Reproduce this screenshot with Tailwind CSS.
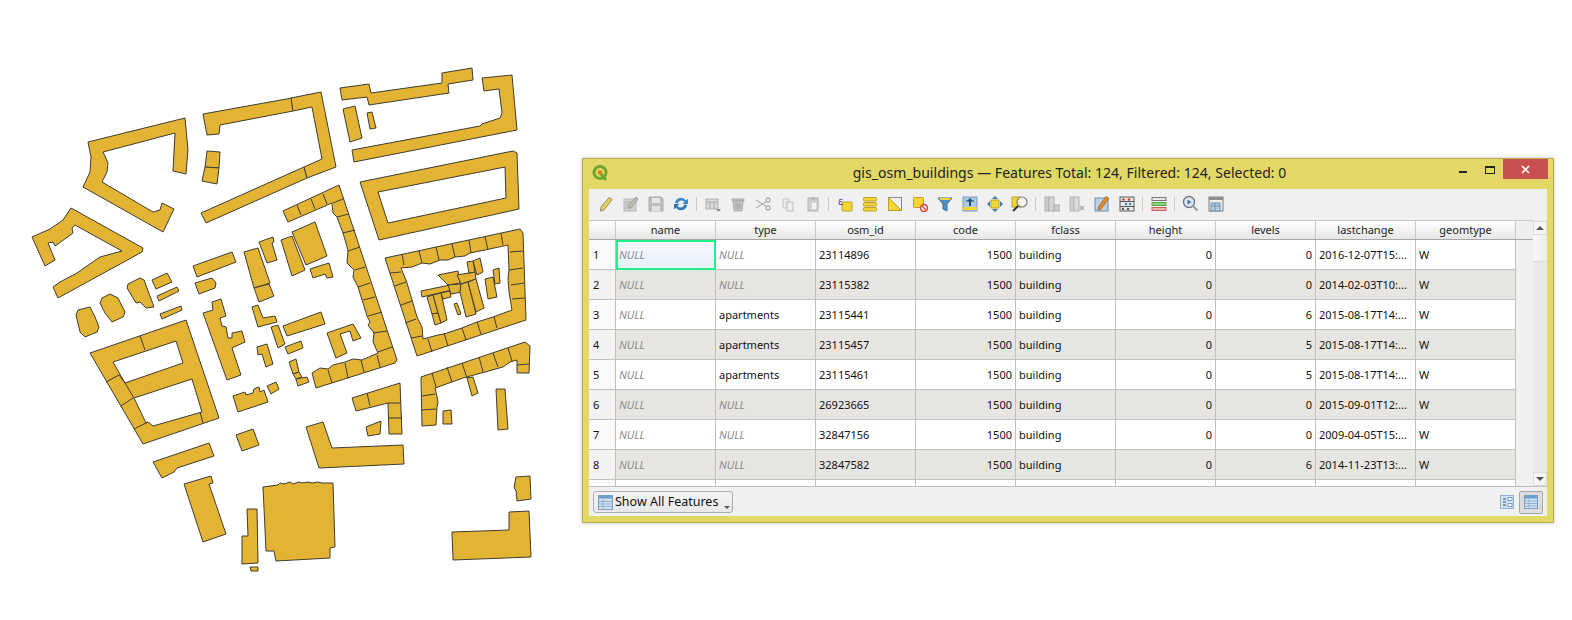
<!DOCTYPE html>
<html>
<head>
<meta charset="utf-8">
<script src="https://cdn.jsdelivr.net/npm/@tailwindcss/browser@4"></script>
</head>
<body class="bg-white overflow-hidden">
<div class="flex w-[1572px] h-[620px] bg-white font-['Noto_Sans',sans-serif]">
  <svg class="w-[582px] h-[620px] shrink-0" viewBox="0 0 582 620">
    <g fill="#e3b333" stroke="#3f3c30" stroke-width="1" stroke-linejoin="round">
      <polygon points="88,142 185,118 188,150 186,174 173,171 175,133 103,152 108,163 107,172 102,182 153,212 160,210 162,203 174,209 163,232 83,187 90,172 91,157"/>
      <polygon points="71,208 143,248 142,252 58,298 53,287 60,282 77,273 84,268 100,257 122,251 75,225 72,228 73,233 55,246 53,242 48,243 55,260 45,266 32,237 50,229 63,220"/>
      <polygon points="203,114 292,98 293,111 220,125 219,134 207,135"/>
      <polygon points="201,213 304,167 307,178 206,223"/>
      <polygon points="291,98 321,92 336,167 307,178 304,167 322,159 312,107 293,111"/>
      <polygon points="207,151 220,152 219,168 205,167"/>
      <polygon points="205,167 219,168 217,184 202,181"/>
      <polygon points="340,88 369,84 371,93 442,83 442,73 472,68 473,80 448,84 449,93 369,105 367,97 342,100"/>
      <polygon points="343,109 355,106 362,138 350,142"/>
      <polygon points="367,113 372,112 376,128 370,129"/>
      <polygon points="482,78 512,75 517,130 354,162 352,150 480,126 482,124 500,118 502,113 499,89 484,91"/>
      <path fill-rule="evenodd" d="M360,182 L513,151 L517,153 L519,209 L379,240 Z M378,192 L505,167 L506,198 L388,223 Z"/>
      <path fill-rule="evenodd" d="M385,258 L520,229 L523,233 L526,320 L417,356 Z M401,268 L412,267 L422,263 L430,264 L440,260 L448,260 L455,257 L465,256 L470,253 L485,250 L508,245 L509,270 L508,278 L509,292 L512,310 L493,317 L477,322 L462,328 L444,334 L438,335 L423,339 L422,327 L417,317 L412,300 L407,283 Z"/>
      <g fill="none">
        <path d="M402,254 L404,265 M419,251 L422,263 M436,247 L439,260 M452,244 L455,257 M469,240 L471,253 M485,237 L488,250 M501,233 L503,245 M510,252 L523,251 M509,270 L523,268 M511,285 L524,283 M512,299 L525,298 M494,317 L497,328 M477,322 L481,334 M462,328 L466,340 M444,333 L448,346 M428,339 L432,352 M390,273 L401,272 M395,286 L406,282 M401,305 L412,301 M405,323 L416,319 M411,338 L422,336"/>
      </g>
      <polygon points="421,291 450,285 452,290 422,297"/>
      <polygon points="441,293 450,291 451,297 443,299"/>
      <polygon points="427,297 433,295 438,313 432,314"/>
      <polygon points="432,314 438,313 441,323 435,325"/>
      <polygon points="433,295 441,293 447,320 441,323"/>
      <polygon points="438,275 458,271 460,283 448,285 445,282"/>
      <polygon points="457,275 475,272 476,279 461,284"/>
      <polygon points="448,285 461,284 462,292 451,294"/>
      <polygon points="461,284 468,282 476,314 466,317 460,292"/>
      <polygon points="468,282 476,279 484,308 476,312"/>
      <polygon points="467,262 473,261 475,272 469,273"/>
      <polygon points="473,261 480,258 483,272 477,275"/>
      <polygon points="485,279 493,277 497,297 488,299"/>
      <polygon points="493,270 499,268 500,283 495,284"/>
      <polygon points="454,304 457,303 461,314 458,315"/>
      <polygon points="283,211 339,185 344,200 397,360 395,363 316,388 312,373 320,368 328,369 333,365 345,362 353,359 362,360 378,353 373,342 374,333 368,325 370,322 367,316 363,303 358,287 353,277 354,270 347,263 348,250 343,233 337,217 333,213 332,203 288,222"/>
      <g fill="none">
        <path d="M297,205 L301,215 M311,199 L315,209 M323,194 L327,204 M333,203 L343,199 M337,217 L349,214 M343,233 L355,230 M348,251 L360,247 M355,270 L365,267 M358,287 L370,283 M363,300 L375,297 M368,316 L382,312 M373,333 L387,331 M378,352 L392,347 M377,355 L380,367 M361,360 L364,372 M345,363 L348,378 M328,370 L332,383"/>
      </g>
      <polygon points="292,232 315,222 327,256 306,265"/>
      <polygon points="281,240 292,236 305,270 292,276"/>
      <polygon points="310,269 329,263 333,277 327,278 325,274 313,278"/>
      <polygon points="259,242 273,237 274,242 272,243 277,260 267,263"/>
      <polygon points="244,252 258,248 270,283 254,288"/>
      <polygon points="254,288 269,284 274,296 259,302"/>
      <polygon points="193,266 232,252 236,262 197,277"/>
      <polygon points="195,283 212,278 216,283 215,288 199,294"/>
      <polygon points="152,280 167,273 172,282 156,289"/>
      <polygon points="157,296 177,287 179,291 159,301"/>
      <polygon points="160,314 181,306 182,310 162,319"/>
      <polygon points="203,313 213,310 212,302 221,299 226,316 220,318 222,326 226,327 228,338 232,338 232,333 242,331 245,342 232,348 241,375 227,380"/>
      <polygon points="252,307 258,305 263,318 275,316 277,322 258,327"/>
      <polygon points="283,326 321,312 325,324 287,336"/>
      <polygon points="271,327 278,325 285,344 278,348"/>
      <polygon points="285,347 301,341 303,348 288,354"/>
      <polygon points="257,347 267,344 273,364 266,367 262,354 258,355"/>
      <polygon points="289,362 296,359 299,372 293,374"/>
      <polygon points="293,374 299,372 302,377 296,379"/>
      <polygon points="296,379 307,377 309,382 298,386"/>
      <polygon points="267,386 276,382 279,389 271,394"/>
      <polygon points="327,333 353,324 361,338 353,341 350,331 340,334 347,353 336,358"/>
      <polygon points="233,396 245,392 246,395 253,393 254,389 259,387 260,392 264,390 268,402 238,412"/>
      <polygon points="236,435 253,429 259,445 242,451"/>
      <path fill-rule="evenodd" d="M90,353 L186,320 L219,418 L143,444 Z M113,362 L176,341 L183,363 L125,383 Z M134,398 L192,379 L202,412 L153,426 L148,422 L146,423 Z"/>
      <g fill="none">
        <path d="M140,336 L145,350 M106,382 L119,375 L125,383 L134,398 M121,406 L133,398 M134,429 L148,422 M200,412 L203,423"/>
      </g>
      <polygon points="153,462 209,443 214,456 177,468 174,472 162,478"/>
      <polygon points="184,484 211,476 213,483 209,484 226,534 203,542"/>
      <polygon points="263,487 278,485 280,483 284,484 290,482 293,484 299,482 302,483 308,482 312,483 318,482 322,483 323,483 333,483 335,547 330,548 330,558 276,561 274,551 266,551"/>
      <polygon points="247,509 257,509 258,563 242,564 242,536 248,536"/>
      <polygon points="250,567 258,567 258,571 251,571"/>
      <polygon points="306,427 323,422 332,448 403,445 404,464 319,468"/>
      <polygon points="352,398 400,383 402,434 389,434 388,403 356,411"/>
      <path fill="none" d="M367,393 L370,406 M388,403 L401,403 M389,418 L402,418"/>
      <polygon points="366,427 381,421 380,434 368,436"/>
      <polygon points="421,377 525,342 530,346 529,373 517,373 517,360 510,362 503,367 463,378 435,388 437,397 438,402 437,407 436,425 422,426"/>
      <path fill="none" d="M432,373 L436,387 M447,367 L452,382 M462,363 L467,378 M479,357 L483,372 M493,353 L498,367 M508,348 L512,361 M517,365 L529,364 M422,396 L435,394 M422,410 L436,409"/>
      <polygon points="467,378 473,377 478,393 472,396"/>
      <polygon points="443,411 451,410 452,424 443,424"/>
      <polygon points="496,389 505,389 508,429 498,430"/>
      <polygon points="516,477 530,476 531,499 517,501 516,490 514,488"/>
      <polygon points="452,532 509,530 509,512 529,511 531,557 453,560"/>
      <polygon points="128,284 140,278 144,280 154,307 146,308 140,302 136,303 127,288"/>
      <polygon points="102,298 110,294 118,298 125,312 123,317 112,322 105,313 100,303"/>
      <polygon points="76,315 78,310 90,307 95,317 99,327 97,332 85,337 80,332"/>
    </g>
  </svg>

  <div class="w-[972px] h-[365px] mt-[158px] shrink-0 border border-[#b8ab4c] bg-[#e2d866] flex flex-col shadow-[0_0_4px_rgba(0,0,0,0.25)]">
    <div class="h-[30px] shrink-0 flex items-start relative">
      <svg class="w-[18px] h-[18px] ml-[8px] mt-[5px]" viewBox="0 0 18 18">
        <circle cx="9" cy="8.5" r="6" fill="#e2d866" stroke="#6aa72c" stroke-width="3"/>
        <circle cx="9" cy="8.5" r="2.2" fill="#ee7913"/>
        <path d="M10 10 L15 16" stroke="#6aa72c" stroke-width="3"/>
      </svg>
      <div class="flex-1 text-center text-[14px] leading-[28px] tracking-[0.03px] text-[#222] whitespace-nowrap pl-[53px] pr-[76px]">gis_osm_buildings — Features Total: 124, Filtered: 124, Selected: 0</div>
      <div class="absolute right-[5px] top-0 flex items-start">
        <div class="w-[8px] h-[2px] mt-[12px] mr-[18px] bg-[#222]"></div>
        <div class="w-[10px] h-[8px] mt-[7px] mr-[8px] border border-[#222] border-t-2"></div>
        <div class="w-[45px] h-[20px] bg-[#c75050] flex items-center justify-center">
          <svg class="w-[9px] h-[9px]" viewBox="0 0 9 9"><path d="M1 1 L8 8 M8 1 L1 8" stroke="#fff" stroke-width="1.6"/></svg>
        </div>
      </div>
    </div>
    <div class="mx-[6px] h-[327px] bg-[#f0f0f0] flex flex-col overflow-hidden">
      <div class="h-[31px] shrink-0 flex items-center pl-[4px] pb-[2px]">
        <div class="w-[25px] flex justify-center"><svg class="w-[16px] h-[16px]" viewBox="0 0 16 16"><path d="M11 1.5 L14 3.5 L6 14 L2.5 15 L3 11 Z" fill="#e8cf5a" stroke="#8b8b6a"/></svg></div>
        <div class="w-[25px] flex justify-center"><svg class="w-[16px] h-[16px]" viewBox="0 0 16 16"><rect x="1" y="3" width="12" height="12" fill="#cfcfcc" stroke="#b5b5b2"/><path d="M3 6H10M3 9H8M3 12H7" stroke="#a8a8a5"/><path d="M13 1 L15 3 L8 12 L6 12 L6 9 Z" fill="#bdbdb0" stroke="#a0a09a"/></svg></div>
        <div class="w-[25px] flex justify-center"><svg class="w-[16px] h-[16px]" viewBox="0 0 16 16"><path d="M1 1H13L15 3V15H1Z" fill="#bdbdbd" stroke="#a8a8a8"/><rect x="4" y="2" width="8" height="5" fill="#e8e8e8"/><rect x="4" y="10" width="8" height="5" fill="#e0e0e0"/></svg></div>
        <div class="w-[25px] flex justify-center"><svg class="w-[16px] h-[16px]" viewBox="0 0 16 16"><path d="M2 7 A6 6 0 0 1 13 4.5 L15 2.5 V8 H9.5 L11.5 6 A4 4 0 0 0 4.5 7.5 Z" fill="#3a86c8"/><path d="M14 9 A6 6 0 0 1 3 11.5 L1 13.5 V8 H6.5 L4.5 10 A4 4 0 0 0 11.5 8.5 Z" fill="#2f76b8"/></svg></div>
        <div class="w-[7px] flex justify-center"><div class="w-px h-[14px] bg-[#c8c8c8]"></div></div>
        <div class="w-[25px] flex justify-center"><svg class="w-[16px] h-[16px]" viewBox="0 0 16 16"><rect x="1" y="3" width="12" height="10" fill="#d8d8d8" stroke="#b0b0b0"/><path d="M1 6H13M5 6V13M9 6V13" stroke="#b0b0b0"/><path d="M11 13H16L13.5 16Z" fill="#8a8a8a"/></svg></div>
        <div class="w-[25px] flex justify-center"><svg class="w-[16px] h-[16px]" viewBox="0 0 16 16"><path d="M2 3H14V5H2Z M3 5H13L12 15H4Z" fill="#c4c4c4" stroke="#ababab"/><path d="M6 7V13M8 7V13M10 7V13" stroke="#a5a5a5"/></svg></div>
        <div class="w-[25px] flex justify-center"><svg class="w-[16px] h-[16px]" viewBox="0 0 16 16"><circle cx="13" cy="4" r="2" fill="none" stroke="#adadad" stroke-width="1.3"/><circle cx="13" cy="12" r="2" fill="none" stroke="#adadad" stroke-width="1.3"/><path d="M1 4 L11.5 10.5 M1 12 L11.5 5.5" stroke="#b5b5b5" stroke-width="1.2"/></svg></div>
        <div class="w-[25px] flex justify-center"><svg class="w-[16px] h-[16px]" viewBox="0 0 16 16"><path d="M3 3H9V12H3Z" fill="#e8e8e8" stroke="#c4c4c4"/><path d="M7 6H13V15H7Z" fill="#eee" stroke="#bcbcbc"/></svg></div>
        <div class="w-[25px] flex justify-center"><svg class="w-[16px] h-[16px]" viewBox="0 0 16 16"><rect x="3" y="2" width="10" height="13" fill="#d0d0d0" stroke="#b0b0b0"/><rect x="6" y="1" width="4" height="3" fill="#bcbcbc"/><rect x="6" y="6" width="6" height="8" fill="#efefef" stroke="#c4c4c4"/></svg></div>
        <div class="w-[7px] flex justify-center"><div class="w-px h-[14px] bg-[#c8c8c8]"></div></div>
        <div class="w-[25px] flex justify-center"><svg class="w-[16px] h-[16px] overflow-visible" viewBox="0 0 16 16"><rect x="5" y="6" width="10" height="9" rx="1" fill="#f2d633" stroke="#b9a128"/><text x="1" y="9" font-size="11" font-family="Noto Sans" fill="#6a3a8a">ε</text></svg></div>
        <div class="w-[25px] flex justify-center"><svg class="w-[16px] h-[16px]" viewBox="0 0 16 16"><rect x="1.5" y="1.5" width="13" height="3.5" rx="1" fill="#f2d633" stroke="#b9a128"/><rect x="1.5" y="6.5" width="13" height="3.5" rx="1" fill="#f2d633" stroke="#b9a128"/><rect x="1.5" y="11.5" width="13" height="3.5" rx="1" fill="#f2d633" stroke="#b9a128"/></svg></div>
        <div class="w-[25px] flex justify-center"><svg class="w-[16px] h-[16px]" viewBox="0 0 16 16"><rect x="1.5" y="1.5" width="13" height="13" fill="#f0f0f0" stroke="#8a8a8a"/><path d="M1.5 1.5 L14.5 14.5 H1.5Z" fill="#f2d633" stroke="#b9a128"/></svg></div>
        <div class="w-[25px] flex justify-center"><svg class="w-[16px] h-[16px]" viewBox="0 0 16 16"><rect x="1.5" y="1.5" width="10" height="10" rx="1" fill="#f2d633" stroke="#b9a128"/><circle cx="12" cy="12" r="3.5" fill="#f5f5f5" stroke="#d8403a" stroke-width="1.5"/><path d="M10 10 L14 14" stroke="#d8403a" stroke-width="1.3"/></svg></div>
        <div class="w-[25px] flex justify-center"><svg class="w-[16px] h-[16px]" viewBox="0 0 16 16"><path d="M1 2H15L10 8V15L6 13V8Z" fill="#4f8db8" stroke="#3b6e90"/><path d="M2 2H14L12.5 4H3.5Z" fill="#f2d633"/></svg></div>
        <div class="w-[25px] flex justify-center"><svg class="w-[16px] h-[16px]" viewBox="0 0 16 16"><rect x="1" y="1" width="14" height="14" fill="#a9c8e2" stroke="#7c9bb4"/><rect x="1" y="11" width="14" height="3" fill="#f2d633"/><path d="M8 2 L11 5 H9V10H7V5H5Z" fill="#234f75"/><path d="M4 5H12" stroke="#234f75"/></svg></div>
        <div class="w-[25px] flex justify-center"><svg class="w-[16px] h-[16px]" viewBox="0 0 16 16"><rect x="4" y="4" width="8" height="8" fill="#f2d633" stroke="#b9a128"/><path d="M8 0 L11 3H5Z M8 16 L11 13H5Z M0 8 L3 5V11Z M16 8 L13 5V11Z" fill="#3b7cb5"/></svg></div>
        <div class="w-[25px] flex justify-center"><svg class="w-[18px] h-[18px]" viewBox="0 0 18 18"><rect x="1" y="2" width="9" height="10" fill="#f2d633" stroke="#b9a128"/><circle cx="11" cy="7" r="5" fill="#f4f4ee" fill-opacity="0.9" stroke="#7d7d7d" stroke-width="1.2"/><path d="M7 11 L2 16" stroke="#333" stroke-width="2"/></svg></div>
        <div class="w-[7px] flex justify-center"><div class="w-px h-[14px] bg-[#c8c8c8]"></div></div>
        <div class="w-[25px] flex justify-center"><svg class="w-[16px] h-[16px]" viewBox="0 0 16 16"><rect x="1" y="1" width="4" height="14" fill="#c8c8c8" stroke="#adadad"/><rect x="5" y="1" width="5" height="14" fill="#d6d6d6" stroke="#adadad"/><rect x="10" y="9" width="6" height="6" fill="#c8c8c8" stroke="#adadad"/></svg></div>
        <div class="w-[25px] flex justify-center"><svg class="w-[16px] h-[16px]" viewBox="0 0 16 16"><rect x="1" y="1" width="4" height="14" fill="#d0d0d0" stroke="#b4b4b4"/><rect x="5" y="1" width="5" height="14" fill="#dcdcdc" stroke="#b4b4b4"/><path d="M11 10 L15 14 M15 10 L11 14" stroke="#a8a8a8" stroke-width="1.4"/></svg></div>
        <div class="w-[25px] flex justify-center"><svg class="w-[16px] h-[16px]" viewBox="0 0 16 16"><rect x="1" y="2" width="13" height="13" fill="#b9d2e8" stroke="#6c8ba5"/><path d="M12 0.5 L15 2.5 L7 13 L4 14 L4.5 10.5 Z" fill="#e98a28" stroke="#8b5a20" stroke-width="0.7"/></svg></div>
        <div class="w-[25px] flex justify-center"><svg class="w-[16px] h-[16px]" viewBox="0 0 16 16"><rect x="1" y="1" width="14" height="14" fill="#e8e8e8" stroke="#5a5a5a"/><path d="M1 5.5H15M1 10.5H15" stroke="#5a5a5a"/><circle cx="4.5" cy="3.5" r="1.2" fill="#c0392b"/><circle cx="10" cy="3.5" r="1.2" fill="#c0392b"/><circle cx="7" cy="8" r="1.2" fill="#3b7cb5"/><circle cx="11" cy="8" r="1.2" fill="#3b7cb5"/><circle cx="4" cy="13" r="1.2" fill="#555"/><circle cx="9" cy="13" r="1.2" fill="#555"/></svg></div>
        <div class="w-[7px] flex justify-center"><div class="w-px h-[14px] bg-[#c8c8c8]"></div></div>
        <div class="w-[25px] flex justify-center"><svg class="w-[16px] h-[16px]" viewBox="0 0 16 16"><rect x="1" y="1.5" width="14" height="3" fill="#e8e8e8" stroke="#777"/><rect x="1" y="6.5" width="14" height="3" fill="#8fd17a" stroke="#5fa54a"/><rect x="1" y="11.5" width="14" height="3" fill="#f4b6b0" stroke="#c9605a"/></svg></div>
        <div class="w-[7px] flex justify-center"><div class="w-px h-[14px] bg-[#c8c8c8]"></div></div>
        <div class="w-[25px] flex justify-center"><svg class="w-[17px] h-[17px]" viewBox="0 0 17 17"><circle cx="7" cy="7" r="5.5" fill="#dfe7ee" stroke="#6f7a85" stroke-width="1.4"/><path d="M5.5 4.5 L9.5 7 L5.5 9.5Z" fill="#2f76b8"/><path d="M11 11 L15.5 15.5" stroke="#9a9a9a" stroke-width="2"/></svg></div>
        <div class="w-[25px] flex justify-center"><svg class="w-[16px] h-[16px]" viewBox="0 0 16 16"><rect x="1" y="1" width="14" height="14" fill="#ededed" stroke="#7d7d7d"/><rect x="1" y="1" width="14" height="3" fill="#8d8d8d"/><rect x="3" y="7" width="9" height="8" fill="#b4d0e8" stroke="#6c8ba5"/><path d="M3 10H12M7 7V15" stroke="#6c8ba5"/></svg></div>
      </div>

      <div class="h-[266px] shrink-0 flex overflow-hidden text-[11px] text-[#111]">
        <div class="w-[944px] shrink-0 flex flex-col overflow-hidden">
          <div class="grid grid-cols-[27px_repeat(9,100px)_17px] h-[20px] shrink-0 bg-gradient-to-b from-white to-[#e6e6e6] border-t border-[#c8c8c8] border-b border-b-[#a8a8a8] text-center leading-[18px] text-[#222]">
            <div class="border-r border-[#c8c8c8]"></div>
            <div class="border-r border-[#c8c8c8]">name</div>
            <div class="border-r border-[#c8c8c8]">type</div>
            <div class="border-r border-[#c8c8c8]">osm_id</div>
            <div class="border-r border-[#c8c8c8]">code</div>
            <div class="border-r border-[#c8c8c8]">fclass</div>
            <div class="border-r border-[#c8c8c8]">height</div>
            <div class="border-r border-[#c8c8c8]">levels</div>
            <div class="border-r border-[#c8c8c8]">lastchange</div>
            <div class="border-r border-[#c8c8c8]">geomtype</div>
            <div class="bg-[#eeeeee]"></div>
          </div>
          <div class="grid grid-cols-[27px_repeat(9,100px)] auto-rows-[30px] w-[927px] bg-white items-stretch [&>div]:pt-[2px]">
            <div class="border-r border-b border-[#c0c0c0] bg-[#fafafa] flex items-center pl-[4px]">1</div>
            <div class="border-r border-b border-[#c0c0c0] flex items-center pl-[3px] italic text-[#8a8a8a] outline-2 -outline-offset-2 outline-[#22ee8c] bg-gradient-to-b from-[#f7fafe] to-[#e8f0fa]">NULL</div>
            <div class="border-r border-b border-[#c0c0c0] flex items-center pl-[3px] italic text-[#8a8a8a]">NULL</div>
            <div class="border-r border-b border-[#c0c0c0] flex items-center pl-[3px]">23114896</div>
            <div class="border-r border-b border-[#c0c0c0] flex items-center justify-end pr-[3px]">1500</div>
            <div class="border-r border-b border-[#c0c0c0] flex items-center pl-[3px]">building</div>
            <div class="border-r border-b border-[#c0c0c0] flex items-center justify-end pr-[3px]">0</div>
            <div class="border-r border-b border-[#c0c0c0] flex items-center justify-end pr-[3px]">0</div>
            <div class="border-r border-b border-[#c0c0c0] flex items-center pl-[3px]">2016-12-07T15:...</div>
            <div class="border-r border-b border-[#c0c0c0] flex items-center pl-[3px]">W</div>

            <div class="border-r border-b border-[#c0c0c0] bg-[#f2f2f2] flex items-center pl-[4px]">2</div>
            <div class="border-r border-b border-[#c0c0c0] bg-[#e7e5e1] flex items-center pl-[3px] italic text-[#8a8a8a]">NULL</div>
            <div class="border-r border-b border-[#c0c0c0] bg-[#e7e5e1] flex items-center pl-[3px] italic text-[#8a8a8a]">NULL</div>
            <div class="border-r border-b border-[#c0c0c0] bg-[#e7e5e1] flex items-center pl-[3px]">23115382</div>
            <div class="border-r border-b border-[#c0c0c0] bg-[#e7e5e1] flex items-center justify-end pr-[3px]">1500</div>
            <div class="border-r border-b border-[#c0c0c0] bg-[#e7e5e1] flex items-center pl-[3px]">building</div>
            <div class="border-r border-b border-[#c0c0c0] bg-[#e7e5e1] flex items-center justify-end pr-[3px]">0</div>
            <div class="border-r border-b border-[#c0c0c0] bg-[#e7e5e1] flex items-center justify-end pr-[3px]">0</div>
            <div class="border-r border-b border-[#c0c0c0] bg-[#e7e5e1] flex items-center pl-[3px]">2014-02-03T10:...</div>
            <div class="border-r border-b border-[#c0c0c0] bg-[#e7e5e1] flex items-center pl-[3px]">W</div>

            <div class="border-r border-b border-[#c0c0c0] bg-[#fafafa] flex items-center pl-[4px]">3</div>
            <div class="border-r border-b border-[#c0c0c0] flex items-center pl-[3px] italic text-[#8a8a8a]">NULL</div>
            <div class="border-r border-b border-[#c0c0c0] flex items-center pl-[3px]">apartments</div>
            <div class="border-r border-b border-[#c0c0c0] flex items-center pl-[3px]">23115441</div>
            <div class="border-r border-b border-[#c0c0c0] flex items-center justify-end pr-[3px]">1500</div>
            <div class="border-r border-b border-[#c0c0c0] flex items-center pl-[3px]">building</div>
            <div class="border-r border-b border-[#c0c0c0] flex items-center justify-end pr-[3px]">0</div>
            <div class="border-r border-b border-[#c0c0c0] flex items-center justify-end pr-[3px]">6</div>
            <div class="border-r border-b border-[#c0c0c0] flex items-center pl-[3px]">2015-08-17T14:...</div>
            <div class="border-r border-b border-[#c0c0c0] flex items-center pl-[3px]">W</div>

            <div class="border-r border-b border-[#c0c0c0] bg-[#f2f2f2] flex items-center pl-[4px]">4</div>
            <div class="border-r border-b border-[#c0c0c0] bg-[#e7e5e1] flex items-center pl-[3px] italic text-[#8a8a8a]">NULL</div>
            <div class="border-r border-b border-[#c0c0c0] bg-[#e7e5e1] flex items-center pl-[3px]">apartments</div>
            <div class="border-r border-b border-[#c0c0c0] bg-[#e7e5e1] flex items-center pl-[3px]">23115457</div>
            <div class="border-r border-b border-[#c0c0c0] bg-[#e7e5e1] flex items-center justify-end pr-[3px]">1500</div>
            <div class="border-r border-b border-[#c0c0c0] bg-[#e7e5e1] flex items-center pl-[3px]">building</div>
            <div class="border-r border-b border-[#c0c0c0] bg-[#e7e5e1] flex items-center justify-end pr-[3px]">0</div>
            <div class="border-r border-b border-[#c0c0c0] bg-[#e7e5e1] flex items-center justify-end pr-[3px]">5</div>
            <div class="border-r border-b border-[#c0c0c0] bg-[#e7e5e1] flex items-center pl-[3px]">2015-08-17T14:...</div>
            <div class="border-r border-b border-[#c0c0c0] bg-[#e7e5e1] flex items-center pl-[3px]">W</div>

            <div class="border-r border-b border-[#c0c0c0] bg-[#fafafa] flex items-center pl-[4px]">5</div>
            <div class="border-r border-b border-[#c0c0c0] flex items-center pl-[3px] italic text-[#8a8a8a]">NULL</div>
            <div class="border-r border-b border-[#c0c0c0] flex items-center pl-[3px]">apartments</div>
            <div class="border-r border-b border-[#c0c0c0] flex items-center pl-[3px]">23115461</div>
            <div class="border-r border-b border-[#c0c0c0] flex items-center justify-end pr-[3px]">1500</div>
            <div class="border-r border-b border-[#c0c0c0] flex items-center pl-[3px]">building</div>
            <div class="border-r border-b border-[#c0c0c0] flex items-center justify-end pr-[3px]">0</div>
            <div class="border-r border-b border-[#c0c0c0] flex items-center justify-end pr-[3px]">5</div>
            <div class="border-r border-b border-[#c0c0c0] flex items-center pl-[3px]">2015-08-17T14:...</div>
            <div class="border-r border-b border-[#c0c0c0] flex items-center pl-[3px]">W</div>

            <div class="border-r border-b border-[#c0c0c0] bg-[#f2f2f2] flex items-center pl-[4px]">6</div>
            <div class="border-r border-b border-[#c0c0c0] bg-[#e7e5e1] flex items-center pl-[3px] italic text-[#8a8a8a]">NULL</div>
            <div class="border-r border-b border-[#c0c0c0] bg-[#e7e5e1] flex items-center pl-[3px] italic text-[#8a8a8a]">NULL</div>
            <div class="border-r border-b border-[#c0c0c0] bg-[#e7e5e1] flex items-center pl-[3px]">26923665</div>
            <div class="border-r border-b border-[#c0c0c0] bg-[#e7e5e1] flex items-center justify-end pr-[3px]">1500</div>
            <div class="border-r border-b border-[#c0c0c0] bg-[#e7e5e1] flex items-center pl-[3px]">building</div>
            <div class="border-r border-b border-[#c0c0c0] bg-[#e7e5e1] flex items-center justify-end pr-[3px]">0</div>
            <div class="border-r border-b border-[#c0c0c0] bg-[#e7e5e1] flex items-center justify-end pr-[3px]">0</div>
            <div class="border-r border-b border-[#c0c0c0] bg-[#e7e5e1] flex items-center pl-[3px]">2015-09-01T12:...</div>
            <div class="border-r border-b border-[#c0c0c0] bg-[#e7e5e1] flex items-center pl-[3px]">W</div>

            <div class="border-r border-b border-[#c0c0c0] bg-[#fafafa] flex items-center pl-[4px]">7</div>
            <div class="border-r border-b border-[#c0c0c0] flex items-center pl-[3px] italic text-[#8a8a8a]">NULL</div>
            <div class="border-r border-b border-[#c0c0c0] flex items-center pl-[3px] italic text-[#8a8a8a]">NULL</div>
            <div class="border-r border-b border-[#c0c0c0] flex items-center pl-[3px]">32847156</div>
            <div class="border-r border-b border-[#c0c0c0] flex items-center justify-end pr-[3px]">1500</div>
            <div class="border-r border-b border-[#c0c0c0] flex items-center pl-[3px]">building</div>
            <div class="border-r border-b border-[#c0c0c0] flex items-center justify-end pr-[3px]">0</div>
            <div class="border-r border-b border-[#c0c0c0] flex items-center justify-end pr-[3px]">0</div>
            <div class="border-r border-b border-[#c0c0c0] flex items-center pl-[3px]">2009-04-05T15:...</div>
            <div class="border-r border-b border-[#c0c0c0] flex items-center pl-[3px]">W</div>

            <div class="border-r border-b border-[#c0c0c0] bg-[#f2f2f2] flex items-center pl-[4px]">8</div>
            <div class="border-r border-b border-[#c0c0c0] bg-[#e7e5e1] flex items-center pl-[3px] italic text-[#8a8a8a]">NULL</div>
            <div class="border-r border-b border-[#c0c0c0] bg-[#e7e5e1] flex items-center pl-[3px] italic text-[#8a8a8a]">NULL</div>
            <div class="border-r border-b border-[#c0c0c0] bg-[#e7e5e1] flex items-center pl-[3px]">32847582</div>
            <div class="border-r border-b border-[#c0c0c0] bg-[#e7e5e1] flex items-center justify-end pr-[3px]">1500</div>
            <div class="border-r border-b border-[#c0c0c0] bg-[#e7e5e1] flex items-center pl-[3px]">building</div>
            <div class="border-r border-b border-[#c0c0c0] bg-[#e7e5e1] flex items-center justify-end pr-[3px]">0</div>
            <div class="border-r border-b border-[#c0c0c0] bg-[#e7e5e1] flex items-center justify-end pr-[3px]">6</div>
            <div class="border-r border-b border-[#c0c0c0] bg-[#e7e5e1] flex items-center pl-[3px]">2014-11-23T13:...</div>
            <div class="border-r border-b border-[#c0c0c0] bg-[#e7e5e1] flex items-center pl-[3px]">W</div>

            <div class="border-r border-[#c0c0c0] bg-[#fafafa]"></div>
            <div class="border-r border-[#c0c0c0]"></div>
            <div class="border-r border-[#c0c0c0]"></div>
            <div class="border-r border-[#c0c0c0]"></div>
            <div class="border-r border-[#c0c0c0]"></div>
            <div class="border-r border-[#c0c0c0]"></div>
            <div class="border-r border-[#c0c0c0]"></div>
            <div class="border-r border-[#c0c0c0]"></div>
            <div class="border-r border-[#c0c0c0]"></div>
            <div class="border-r border-[#c0c0c0]"></div>
          </div>
        </div>
        <div class="w-[14px] shrink-0 bg-[#e8e8e8] flex flex-col">
          <div class="h-[14px] shrink-0 mt-px bg-[#f4f4f4] border border-[#dcdcdc] flex items-center justify-center"><div class="w-0 h-0 border-x-[4px] border-x-transparent border-b-[4px] border-b-[#555]"></div></div>
          <div class="h-[27px] shrink-0 bg-gradient-to-r from-[#f8f8f8] to-[#ececec] border-b border-[#dcdcdc]"></div>
          <div class="flex-1"></div>
          <div class="h-[14px] shrink-0 bg-[#f4f4f4] border border-[#dcdcdc] flex items-center justify-center"><div class="w-0 h-0 border-x-[4px] border-x-transparent border-t-[4px] border-t-[#555]"></div></div>
        </div>
      </div>

      <div class="h-[30px] shrink-0 border-t border-[#c0c0c0] flex items-center pl-[4px] pr-[4px] relative">
        <div class="w-[140px] h-[22px] mt-[1px] rounded-[3px] border border-[#adadad] bg-gradient-to-b from-[#f4f4f4] to-[#e8e8e8] flex items-center pl-[4px] text-[12.5px] text-[#111]">
          <svg class="w-[15px] h-[15px] shrink-0" viewBox="0 0 15 15"><rect x="0.5" y="0.5" width="14" height="14" fill="#cfe1f2" stroke="#7b9fc0"/><rect x="0.5" y="0.5" width="14" height="3" fill="#6f9ec9"/><path d="M1 6.5H14M1 9H14M1 11.5H14M5 4V14" stroke="#8fb0cf"/></svg>
          <span class="ml-[2px] whitespace-nowrap">Show All Features</span>
          <div class="ml-[6px] mt-[10px] w-0 h-0 border-x-[3px] border-x-transparent border-t-[3px] border-t-[#555]"></div>
        </div>
        <div class="flex-1"></div>
        <svg class="w-[14px] h-[14px] mr-[5px]" viewBox="0 0 14 14"><rect x="0.5" y="0.5" width="13" height="13" fill="#cfe1f2" stroke="#93b2cf"/><path d="M3 4H6M3 7H6M3 10H6" stroke="#39536b"/><rect x="8" y="2.5" width="4" height="3" fill="#fff" stroke="#7b9fc0"/><rect x="8" y="8.5" width="4" height="3" fill="#fff" stroke="#7b9fc0"/></svg>
        <div class="w-[24px] h-[23px] mt-[1px] rounded-[2px] border border-[#a8a8a8] bg-[#dcdcdc] flex items-center justify-center">
          <svg class="w-[14px] h-[14px]" viewBox="0 0 14 14"><rect x="0.5" y="0.5" width="13" height="13" fill="#cfe1f2" stroke="#7b9fc0"/><rect x="0.5" y="0.5" width="13" height="3" fill="#6f9ec9"/><path d="M1 6H13M1 8.5H13M1 11H13M5 4V13" stroke="#8fb0cf"/></svg>
        </div>
      </div>
    </div>
  </div>
</div>
</body>
</html>
